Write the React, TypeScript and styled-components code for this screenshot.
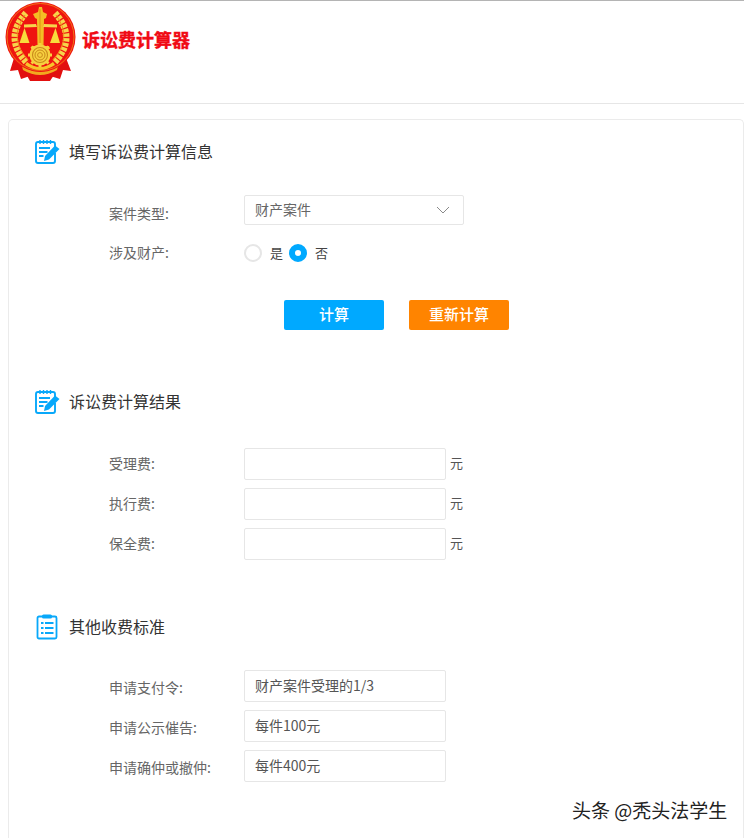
import React from "react";
import styled, { createGlobalStyle } from "styled-components";

const Global = createGlobalStyle`
  html, body { margin: 0; padding: 0; background: #fff; }
  body { font-family: "Liberation Sans", "Noto Sans CJK SC", sans-serif; overflow: hidden; }
  * { box-sizing: border-box; }
`;

const Page = styled.div`
  position: relative;
  width: 744px;
  height: 838px;
  overflow: hidden;
  background: #fff;
  border-top: 1px solid #b4b4b4;
`;

const Header = styled.header`
  height: 103px;
  border-bottom: 1px solid #e6e6e6;
  display: flex;
  align-items: flex-start;
  padding: 1px 0 0 5px;
  gap: 5px;
`;

const LogoTitle = styled.div`
  margin-top: 25px;
  font: 700 18px/24px "Noto Sans CJK SC", sans-serif;
  color: #f00a14;
  white-space: nowrap;
  -webkit-text-stroke: 0.4px #f00a14;
`;

const Card = styled.main`
  margin: 15px 0 0 8px;
  height: 760px;
  border: 1px solid #ebebeb;
  border-bottom: 0;
  border-radius: 5px 5px 0 0;
  padding: 19px 0 0 25px;
`;

const SectionHead = styled.div<{ $top?: number }>`
  display: flex;
  align-items: center;
  gap: 9px;
  height: 26px;
  margin-top: ${(p) => p.$top ?? 0}px;
  font: 400 16px/24px "Noto Sans CJK SC", sans-serif;
  color: #333;
`;

const SectionTitle = styled.span`
  margin-bottom: 2px;
`;

const IconWrap = styled.svg`
  width: 26px;
  height: 26px;
  flex: none;
`;

const Rows = styled.div<{ $top: number; $gap: number }>`
  display: flex;
  flex-direction: column;
  gap: ${(p) => p.$gap}px;
  margin-top: ${(p) => p.$top}px;
  padding-left: 75px;
`;

const Row = styled.div<{ $h: number }>`
  display: flex;
  align-items: center;
  height: ${(p) => p.$h}px;
`;

const Label = styled.div<{ $shift: number }>`
  width: 135px;
  flex: none;
  margin-top: ${(p) => p.$shift}px;
  font: 400 14px/18px "Noto Sans CJK SC", sans-serif;
  color: #666;
`;

const SelectBox = styled.div`
  width: 220px;
  height: 30px;
  border: 1px solid #e6e6e6;
  border-radius: 2px;
  display: flex;
  align-items: center;
  justify-content: space-between;
  padding: 0 13px 0 10px;
  font: 400 14px/18px "Noto Sans CJK SC", sans-serif;
  color: #666;
`;

const SelectValue = styled.span`
  margin-bottom: 2px;
`;

const Radio = styled.span<{ $on?: boolean }>`
  width: 18px;
  height: 18px;
  border-radius: 50%;
  flex: none;
  background: #fff;
  border: ${(p) => (p.$on ? "6px solid #00a9ff" : "2px solid #e6e6e6")};
`;

const RadioText = styled.span`
  font: 400 13px/18px "Noto Sans CJK SC", sans-serif;
  color: #444;
  margin: 0 6px 0 8px;
`;

const Buttons = styled.div`
  display: flex;
  gap: 25px;
  margin: 32px 0 0 250px;
`;

const Btn = styled.button<{ $bg: string }>`
  width: 100px;
  height: 30px;
  border: 0;
  border-radius: 2px;
  padding: 0 0 2px;
  background: ${(p) => p.$bg};
  color: #fff;
  font: 500 15px/28px "Noto Sans CJK SC", sans-serif;
`;

const Field = styled.div`
  width: 202px;
  height: 32px;
  border: 1px solid #e6e6e6;
  border-radius: 2px;
  padding: 0 10px;
  font: 400 14px/28px "Noto Sans CJK SC", sans-serif;
  color: #555;
`;

const Unit = styled.span`
  margin: 0 0 2px 4px;
  font: 400 13px/18px "Noto Sans CJK SC", sans-serif;
  color: #555;
`;

const Watermark = styled.div`
  position: absolute;
  left: 572px;
  top: 796px;
  font: 400 19px/26px "Noto Sans CJK SC", sans-serif;
  color: #222;
  white-space: nowrap;
  text-shadow: 0 1px 1px rgba(255, 255, 255, 0.8);
`;

const Emblem = () => (
  <svg width="72" height="80" viewBox="5 2 72 80">
    <path d="M14 58 L10 71 L18 70 L21 79 L30 76 L50 76 L60 79 L63 70 L71 71 L66 58 Z" fill="#e20f0f" />
    <path d="M25 72 L30 81 L50 81 L56 72 Z" fill="#e20f0f" />
    <path d="M22 66 Q40 77 58 66 L57 70 Q40 80 23 70 Z" fill="#f2a81e" />
    <circle cx="40.5" cy="37" r="35" fill="#ef1410" />
    <circle cx="40.5" cy="37" r="33.5" fill="none" stroke="#f08a18" strokeWidth="0.8" />
    <path d="M26 13 Q3 38 27 63" fill="none" stroke="#f7d44a" strokeWidth="6.5" strokeDasharray="3.5 1.2" />
    <path d="M55 13 Q78 38 54 63" fill="none" stroke="#f7d44a" strokeWidth="6.5" strokeDasharray="3.5 1.2" />
    <path d="M25 15 Q8 38 28 60" fill="none" stroke="#ef8a18" strokeWidth="0.9" />
    <path d="M56 15 Q73 38 53 60" fill="none" stroke="#ef8a18" strokeWidth="0.9" />
    <path d="M39 7 H42 L43 12 L47 14 L46 18 L44 19 L43.5 46 H37.5 L37 19 L35 18 L33 14 L38 12 Z" fill="#f4bd24" />
    <path d="M40 9 V44" stroke="#d9860f" strokeWidth="0.8" />
    <path d="M24 24.5 L36 24 L37 27 L24 27.5 Z M57 24.5 L44 24 L43 27 L57 27.5 Z" fill="#f7d44a" />
    <path d="M24.5 28 L29.5 43 H19.5 Z" fill="#f8dc3c" />
    <path d="M55.5 28 L60 43 H50 Z" fill="#f8dc3c" />
    <path d="M32 46 H49 L50 49 L35 50 L31 49 Z" fill="#f7c52a" />
    <circle cx="40" cy="55" r="10.5" fill="#f7d040" />
    <path d="M40 43 V67 M28 55 H52 M31.5 46.5 L48.5 63.5 M48.5 46.5 L31.5 63.5" stroke="#f7d040" strokeWidth="3" />
    <circle cx="40" cy="55" r="7.5" fill="none" stroke="#c98a1a" strokeWidth="1.1" />
    <circle cx="40" cy="55" r="5" fill="none" stroke="#c98a1a" strokeWidth="1" />
    <circle cx="40" cy="55" r="2.4" fill="none" stroke="#c98a1a" strokeWidth="1" />
    <path d="M27 62 Q40 72 53 62 L55 65 Q40 75 25 65 Z" fill="#f7c52a" />
  </svg>
);

const NoteIcon = () => (
  <IconWrap viewBox="0 0 26 26">
    <path d="M4 3 H19 Q21 3 21 5 V9 M21 14 V22 Q21 24 19 24 H4 Q2 24 2 22 V5 Q2 3 4 3" fill="none" stroke="#08a8fa" strokeWidth="1.9" />
    <path d="M6 1 V5 M9.5 1 V5 M13 1 V5 M16.5 1 V5" stroke="#08a8fa" strokeWidth="1.4" />
    <path d="M5 9 H16 M5 13 H13.5 M5 17 H9.5" stroke="#08a8fa" strokeWidth="1.8" />
    <path d="M11 17 L21 6.5 L25.5 10 L15 20.5 L10 22 Z" fill="#08a8fa" />
  </IconWrap>
);

const ListIcon = () => (
  <IconWrap viewBox="0 0 26 26">
    <rect x="3.5" y="2.5" width="19" height="22" rx="1.5" fill="none" stroke="#08a8fa" strokeWidth="1.8" />
    <rect x="8" y="0.5" width="10" height="4" rx="1.5" fill="#08a8fa" />
    <path d="M7 9 H9.5 M11 9 H19.5 M7 14 H9.5 M11 14 H19.5 M7 19 H9.5 M11 19 H19.5" stroke="#08a8fa" strokeWidth="2.2" />
  </IconWrap>
);

const Chevron = () => (
  <svg width="14" height="8" viewBox="0 0 14 8">
    <path d="M1 1 L7 7 L13 1" fill="none" stroke="#8a8a8a" strokeWidth="1" />
  </svg>
);

export default function App() {
  return (
    <Page>
      <Global />
      <Header>
        <Emblem />
        <LogoTitle>诉讼费计算器</LogoTitle>
      </Header>
      <Card>
        <SectionHead>
          <NoteIcon />
          <SectionTitle>填写诉讼费计算信息</SectionTitle>
        </SectionHead>
        <Rows $top={30} $gap={13}>
          <Row $h={30}>
            <Label $shift={5}>案件类型:</Label>
            <SelectBox>
              <SelectValue>财产案件</SelectValue>
              <Chevron />
            </SelectBox>
          </Row>
          <Row $h={30}>
            <Label $shift={-2}>涉及财产:</Label>
            <Radio />
            <RadioText>是</RadioText>
            <Radio $on />
            <RadioText>否</RadioText>
          </Row>
        </Rows>
        <Buttons>
          <Btn $bg="#00a9ff">计算</Btn>
          <Btn $bg="#ff8400">重新计算</Btn>
        </Buttons>
        <SectionHead $top={59}>
          <NoteIcon />
          <SectionTitle>诉讼费计算结果</SectionTitle>
        </SectionHead>
        <Rows $top={33} $gap={8}>
          <Row $h={32}>
            <Label $shift={-2}>受理费:</Label>
            <Field />
            <Unit>元</Unit>
          </Row>
          <Row $h={32}>
            <Label $shift={-2}>执行费:</Label>
            <Field />
            <Unit>元</Unit>
          </Row>
          <Row $h={32}>
            <Label $shift={-2}>保全费:</Label>
            <Field />
            <Unit>元</Unit>
          </Row>
        </Rows>
        <SectionHead $top={54}>
          <ListIcon />
          <SectionTitle>其他收费标准</SectionTitle>
        </SectionHead>
        <Rows $top={30} $gap={8}>
          <Row $h={32}>
            <Label $shift={1}>申请支付令:</Label>
            <Field>财产案件受理的1/3</Field>
          </Row>
          <Row $h={32}>
            <Label $shift={1}>申请公示催告:</Label>
            <Field>每件100元</Field>
          </Row>
          <Row $h={32}>
            <Label $shift={1}>申请确仲或撤仲:</Label>
            <Field>每件400元</Field>
          </Row>
        </Rows>
      </Card>
      <Watermark>头条 @秃头法学生</Watermark>
    </Page>
  );
}
